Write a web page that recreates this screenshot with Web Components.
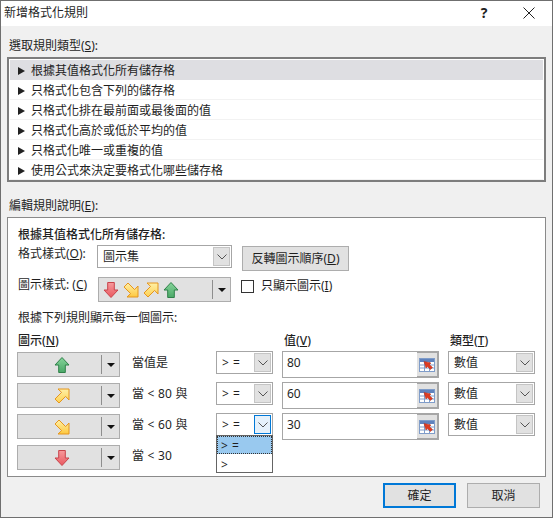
<!DOCTYPE html>
<html lang="zh-Hant">
<head>
<meta charset="utf-8">
<title>新增格式化規則</title>
<style>
  html, body { margin: 0; padding: 0; }
  body { font: 12px/16px "Noto Sans", "Noto Sans CJK TC", sans-serif; color: #1f1f1f; background: #f0f0f0; }
  u { text-underline-offset: 1px; }
</style>
</head>
<body>
<format-dialog heading="新增格式化規則">
  <field-label><span>選取規則類型(<u>S</u>):</span></field-label>
  <rule-list>
    <rule-item selected>根據其值格式化所有儲存格</rule-item>
    <rule-item>只格式化包含下列的儲存格</rule-item>
    <rule-item>只格式化排在最前面或最後面的值</rule-item>
    <rule-item>只格式化高於或低於平均的值</rule-item>
    <rule-item>只格式化唯一或重複的值</rule-item>
    <rule-item>使用公式來決定要格式化哪些儲存格</rule-item>
  </rule-list>
  <field-label style="margin-top:16px"><span>編輯規則說明(<u>E</u>):</span></field-label>
  <desc-panel>
    <div style="font-weight:500">根據其值格式化所有儲存格:</div>
    <form-row style="margin-top:2px;height:26px">
      <span style="width:79px;padding-top:1px">格式樣式(<u>O</u>):</span>
      <combo-box value="圖示集" style="width:135px"></combo-box>
      <push-button style="width:107px;height:25px;margin:1px 0 0 10px">反轉圖示順序(<u>D</u>)</push-button>
    </form-row>
    <form-row style="margin-top:6px;height:25px">
      <span style="width:80px">圖示樣式: (<u>C</u>)</span>
      <icon-picker icons="down,downright,upright,up" style="width:133px;margin-top:0"></icon-picker>
      <check-box style="margin-left:10px">只顯示圖示(<u>I</u>)</check-box>
    </form-row>
    <div style="margin-top:8px">根據下列規則顯示每一個圖示:</div>
    <rule-grid style="margin-top:7px">
      <span style="grid-column:1/4;font-weight:500;padding-left:1px">圖示(<u>N</u>)</span>
      <span style="font-weight:500;padding-left:11px">值(<u>V</u>)</span>
      <span style="font-weight:500;padding-left:2px;white-space:nowrap">類型(<u>T</u>)</span>

      <icon-picker icons="up"></icon-picker>
      <rule-text>當值是</rule-text>
      <combo-box value="&gt; ="></combo-box>
      <range-input value="80"></range-input>
      <combo-box value="數值"></combo-box>

      <icon-picker icons="upright"></icon-picker>
      <rule-text>當 &lt; 80 與</rule-text>
      <combo-box value="&gt; ="></combo-box>
      <range-input value="60"></range-input>
      <combo-box value="數值"></combo-box>

      <icon-picker icons="downright"></icon-picker>
      <rule-text>當 &lt; 60 與</rule-text>
      <combo-box value="&gt; =" open options="&gt; =|&gt;"></combo-box>
      <range-input value="30"></range-input>
      <combo-box value="數值"></combo-box>

      <icon-picker icons="down"></icon-picker>
      <rule-text>當 &lt; 30</rule-text>
    </rule-grid>
  </desc-panel>
  <push-button slot="footer" default style="width:73px;height:25px">確定</push-button>
  <push-button slot="footer" style="width:73px;height:25px">取消</push-button>
</format-dialog>

<script>
const ARROWS = {
  up: ['M8 .5L15 8h-3.7v7.5H4.700V8H1z', '#86d49a', '#4ba868', '#2f8049'],
  down: ['M8 15.5L15 8h-3.7V.5H4.700V8H1z', '#f79a9d', '#e9585f', '#c8434a'],
  upright: ['M15 1v11l-3.4-3.600L5 15l-4-4 6.600-6.600L4 1z', '#fff0a6', '#fdd052', '#e5961f'],
  downright: ['M15 15V4l-3.400 3.600L5 1 1 5l6.600 6.600L4 15z', '#fff0a6', '#fdc83f', '#e5961f']
};

function arrowSvg(name) {
  const [d, top, bottom, stroke] = ARROWS[name];
  return `<svg width="16" height="16" viewBox="0 0 16 16" style="display:block;flex:none">
    <defs><linearGradient id="g-${name}" x1="0" y1="0" x2="0" y2="1">
      <stop offset="0" stop-color="${top}"/><stop offset="1" stop-color="${bottom}"/>
    </linearGradient></defs>
    <path d="${d}" fill="url(#g-${name})" stroke="${stroke}" stroke-width="1" stroke-linejoin="round"/>
  </svg>`;
}

class FormatDialog extends HTMLElement {
  connectedCallback() {
    this.attachShadow({ mode: 'open' });
    this.shadowRoot.innerHTML = `
      <style>
        :host {
          display: flex;
          flex-direction: column;
          box-sizing: border-box;
          width: 553px;
          height: 518px;
          border: 1px solid #6f6f6f;
          background: #f0f0f0;
        }
        .title {
          display: flex;
          align-items: center;
          height: 25px;
          padding: 0 0 2px 3px;
          box-sizing: border-box;
          background: #fff;
        }
        .title span { flex: 1; }
        .help { width: 16px; margin-right: 31px; font-weight: 700; font-size: 14px; text-align: center; }
        .close { margin-right: 17px; }
        .body { flex: 1; padding: 12px 6px 0; }
        .footer { display: flex; justify-content: flex-end; gap: 11px; padding: 0 12px 9px 0; }
      </style>
      <div class="title">
        <span>${this.getAttribute('heading')}</span>
        <div class="help">?</div>
        <svg class="close" width="12" height="12" viewBox="0 0 12 12"><path d="M.5.5l11 11M11.5.5l-11 11" stroke="#222" fill="none"/></svg>
      </div>
      <div class="body"><slot></slot></div>
      <div class="footer"><slot name="footer"></slot></div>
    `;
  }
}

class FieldLabel extends HTMLElement {
  connectedCallback() {
    this.attachShadow({ mode: 'open' });
    this.shadowRoot.innerHTML = `
      <style>:host { display: block; height: 19px; padding-left: 2px; }</style>
      <slot></slot>
    `;
  }
}

class RuleList extends HTMLElement {
  connectedCallback() {
    this.attachShadow({ mode: 'open' });
    this.shadowRoot.innerHTML = `
      <style>
        :host {
          display: block;
          box-sizing: border-box;
          height: 125px;
          padding: 1px;
          border: 2px solid #7d7d7d;
          background: #fff;
        }
      </style>
      <slot></slot>
    `;
  }
}

class RuleItem extends HTMLElement {
  connectedCallback() {
    this.attachShadow({ mode: 'open' });
    this.shadowRoot.innerHTML = `
      <style>
        :host {
          display: flex;
          align-items: center;
          box-sizing: border-box;
          height: 20px;
          padding: 2px 0 0 8px;
          border-bottom: 1px solid #f2f2f2;
        }
        :host([selected]) { background: #dedee2; border-bottom-color: #dedee2; }
        i { width: 0; height: 0; margin-right: 6px; border-left: 7px solid #222; border-top: 4px solid transparent; border-bottom: 4px solid transparent; }
      </style>
      <i></i><slot></slot>
    `;
  }
}

class DescPanel extends HTMLElement {
  connectedCallback() {
    this.attachShadow({ mode: 'open' });
    this.shadowRoot.innerHTML = `
      <style>
        :host {
          display: block;
          box-sizing: border-box;
          height: 260px;
          padding: 9px 9px 0 10px;
          border: 1px solid #8a8a8a;
          background: #fff;
        }
      </style>
      <slot></slot>
    `;
  }
}

class FormRow extends HTMLElement {
  connectedCallback() {
    this.attachShadow({ mode: 'open' });
    this.shadowRoot.innerHTML = `
      <style>:host { display: flex; align-items: flex-start; }</style>
      <slot></slot>
    `;
  }
}

class RuleGrid extends HTMLElement {
  connectedCallback() {
    this.attachShadow({ mode: 'open' });
    this.shadowRoot.innerHTML = `
      <style>
        :host {
          display: grid;
          margin-left: -1px;
          grid-template-columns: 103px 96px 57px 175px 87px;
          grid-template-rows: 14px repeat(4, 27px);
          row-gap: 4px;
        }
      </style>
      <slot></slot>
    `;
  }
}

class RuleText extends HTMLElement {
  connectedCallback() {
    this.attachShadow({ mode: 'open' });
    this.shadowRoot.innerHTML = `
      <style>:host { display: block; padding: 4px 0 0 12px; line-height: 16px; word-spacing: .5px; white-space: nowrap; }</style>
      <slot></slot>
    `;
  }
}

class ComboBox extends HTMLElement {
  connectedCallback() {
    const open = this.hasAttribute('open');
    const options = (this.getAttribute('options') || '').split('|').filter(Boolean);
    this.attachShadow({ mode: 'open' });
    this.shadowRoot.innerHTML = `
      <style>
        :host {
          display: flex;
          position: relative;
          box-sizing: border-box;
          height: 23px;
          border: 1px solid #a6a6a6;
          background: #fff;
          align-items: center;
        }
        .val { flex: 1; padding: 0 0 0 5px; white-space: nowrap; word-spacing: 1px; }
        .btn {
          display: flex;
          align-items: center;
          justify-content: center;
          box-sizing: border-box;
          width: 17px;
          height: 19px;
          margin-right: 1px;
          background: #e1e1e1;
          border: 1px solid #c4c4c4;
        }
        .btn.on { background: #e5f1fb; border-color: #0078d7; }
        .menu {
          position: absolute;
          z-index: 2;
          top: 100%;
          left: -1px;
          right: -1px;
          box-sizing: border-box;
          height: 38px;
          border: 1px solid #646464;
          background: #fff;
        }
        .menu div { box-sizing: border-box; height: 18px; padding: 2px 0 0 4px; line-height: 16px; word-spacing: 1px; }
        .menu div:first-child { background: #99c9ef; outline: 1px dotted #333; outline-offset: -1px; }
        .menu div + div { padding-top: 3px; }
      </style>
      <div class="val">${this.getAttribute('value').replace(/>/g, '&gt;')}</div>
      <div class="btn ${open ? 'on' : ''}">
        <svg width="10" height="6" viewBox="0 0 10 6"><path d="M.5.5L5 5 9.500.5" fill="none" stroke="#555"/></svg>
      </div>
      ${open ? `<div class="menu">${options.map(o => `<div>${o.replace(/>/g, '&gt;')}</div>`).join('')}</div>` : ''}
    `;
  }
}

class IconPicker extends HTMLElement {
  connectedCallback() {
    const icons = this.getAttribute('icons').split(',');
    const single = icons.length === 1;
    this.attachShadow({ mode: 'open' });
    this.shadowRoot.innerHTML = `
      <style>
        :host {
          display: flex;
          align-items: center;
          box-sizing: border-box;
          height: 25px;
          margin-top: 1px;
          border: 1px solid #adadad;
          background: #e1e1e1;
        }
        .icons { flex: 1; display: flex; align-items: center; gap: 4px; padding-left: 4px; justify-content: ${single ? 'center' : 'flex-start'}; }
        .sep { width: 1px; height: 19px; background: #8e8e8e; }
        .drop { display: flex; justify-content: center; width: 17px; }
        .drop i { width: 0; height: 0; border-top: 4px solid #111; border-left: 4px solid transparent; border-right: 4px solid transparent; }
      </style>
      <div class="icons">${icons.map(arrowSvg).join('')}</div>
      <div class="sep"></div>
      <div class="drop"><i></i></div>
    `;
  }
}

class RangeInput extends HTMLElement {
  connectedCallback() {
    this.attachShadow({ mode: 'open' });
    this.shadowRoot.innerHTML = `
      <style>
        :host {
          display: flex;
          box-sizing: border-box;
          height: 27px;
          margin-left: 9px;
          margin-right: 9px;
          border: 1px solid #a6a6a6;
          background: #fff;
        }
        .val { flex: 1; padding: 3px 0 0 4px; }
        .btn {
          display: flex;
          align-items: center;
          justify-content: center;
          box-sizing: border-box;
          width: 22px;
          margin: -1px -1px -1px 0;
          background: #e1e1e1;
          border: 2px solid #a6a6a6;
          border-left: 0;
        }
      </style>
      <div class="val">${this.getAttribute('value')}</div>
      <div class="btn">
        <svg width="16" height="14" viewBox="0 0 16 14">
          <rect x=".5" y=".5" width="15" height="13" fill="#fff" stroke="#7f9cc9"/>
          <rect x="1" y="1" width="14" height="3" fill="#5f82bd"/>
          <path d="M1 7h14M1 10h14M5.500 4v9.500M10.500 4v9.500" stroke="#7f9cc9" fill="none"/>
          <path d="M5 3.500l7 1.500-1.600 1.600L13.500 9.500l-2 2L8.500 8.500 7 10z" fill="#dd3b22" stroke="#b92a14" stroke-width=".5"/>
        </svg>
      </div>
    `;
  }
}

class CheckBox extends HTMLElement {
  connectedCallback() {
    this.attachShadow({ mode: 'open' });
    this.shadowRoot.innerHTML = `
      <style>
        :host { display: flex; align-items: center; gap: 7px; height: 16px; margin-top: 1px; }
        i { display: block; box-sizing: border-box; width: 13px; height: 13px; border: 1px solid #333; background: #fff; }
      </style>
      <i></i><span><slot></slot></span>
    `;
  }
}

class PushButton extends HTMLElement {
  connectedCallback() {
    this.attachShadow({ mode: 'open' });
    this.shadowRoot.innerHTML = `
      <style>
        :host {
          display: flex;
          align-items: center;
          justify-content: center;
          box-sizing: border-box;
          border: 1px solid #adadad;
          background: #e1e1e1;
          white-space: nowrap;
        }
        :host([default]) { border: 2px solid #0078d7; }
      </style>
      <slot></slot>
    `;
  }
}

customElements.define('format-dialog', FormatDialog);
customElements.define('field-label', FieldLabel);
customElements.define('rule-list', RuleList);
customElements.define('rule-item', RuleItem);
customElements.define('desc-panel', DescPanel);
customElements.define('form-row', FormRow);
customElements.define('rule-grid', RuleGrid);
customElements.define('rule-text', RuleText);
customElements.define('combo-box', ComboBox);
customElements.define('icon-picker', IconPicker);
customElements.define('range-input', RangeInput);
customElements.define('check-box', CheckBox);
customElements.define('push-button', PushButton);
</script>
</body>
</html>
